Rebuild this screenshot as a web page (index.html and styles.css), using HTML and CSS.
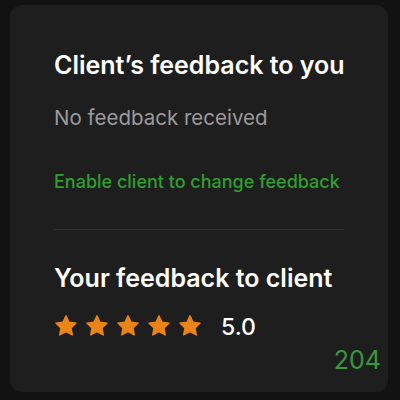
FILE: index.html
```html
<!DOCTYPE html>
<html>
<head>
<meta charset="utf-8">
<link rel="stylesheet" href="styles.css">
</head>
<body>
<div class="card">
  <h2 class="title">Client’s feedback to you</h2>
  <p class="muted">No feedback received</p>
  <a class="link">Enable client to change feedback</a>
  <hr class="divider">
  <h2 class="title title-2">Your feedback to client</h2>
  <div class="rating">
    <div class="stars">
      <svg class="star" viewBox="0 0 24 24"><path d="M12 1.8l3.1 6.4 7 .9-5.1 4.9 1.3 7L12 17.6 5.7 21l1.3-7-5.1-4.9 7-.9z"/></svg>
      <svg class="star" viewBox="0 0 24 24"><path d="M12 1.8l3.1 6.4 7 .9-5.1 4.9 1.3 7L12 17.6 5.7 21l1.3-7-5.1-4.9 7-.9z"/></svg>
      <svg class="star" viewBox="0 0 24 24"><path d="M12 1.8l3.1 6.4 7 .9-5.1 4.9 1.3 7L12 17.6 5.7 21l1.3-7-5.1-4.9 7-.9z"/></svg>
      <svg class="star" viewBox="0 0 24 24"><path d="M12 1.8l3.1 6.4 7 .9-5.1 4.9 1.3 7L12 17.6 5.7 21l1.3-7-5.1-4.9 7-.9z"/></svg>
      <svg class="star" viewBox="0 0 24 24"><path d="M12 1.8l3.1 6.4 7 .9-5.1 4.9 1.3 7L12 17.6 5.7 21l1.3-7-5.1-4.9 7-.9z"/></svg>
    </div>
    <span class="score">5.0</span>
  </div>
  <div class="count">204</div>
</div>
</body>
</html>
```
FILE: styles.css
```css
html, body {
  margin: 0;
  padding: 0;
  background: #121212;
  width: 400px;
  height: 400px;
  overflow: hidden;
}
body {
  padding: 5px 12px 8px 10px;
  box-sizing: border-box;
  font-family: Inter, "Liberation Sans", Arial, sans-serif;
}
.card {
  background: #1e1e1e;
  border-radius: 12px;
  height: 387px;
  box-sizing: border-box;
  padding: 45px 44px 0 44px;
  display: flex;
  flex-direction: column;
}
.card > * {
  flex-shrink: 0;
}
.title {
  margin: 0;
  color: #ffffff;
  font-size: 25px;
  font-weight: 600;
  line-height: 30px;
  white-space: nowrap;
}
.muted {
  margin: 26px 0 0 0;
  color: #9b9b9b;
  font-size: 20.5px;
  line-height: 24px;
  white-space: nowrap;
}
.link {
  margin-top: 42px;
  color: #2f9f2f;
  font-size: 18px;
  font-weight: 500;
  line-height: 20px;
  white-space: nowrap;
}
.divider {
  margin: 37px 0 0 0;
  border: 0;
  height: 1px;
  background: #343434;
}
.title-2 {
  margin-top: 33px;
}
.rating {
  margin-top: 21px;
  display: flex;
  align-items: center;
  gap: 19px;
  height: 24px;
}
.stars {
  display: flex;
  gap: 7px;
}
.star {
  width: 24px;
  height: 24px;
  fill: #ea8418;
  stroke: #ea8418;
  stroke-width: 1.4;
  stroke-linejoin: round;
}
.score {
  color: #ffffff;
  font-size: 23px;
  font-weight: 500;
  line-height: 24px;
  padding-top: 2px;
}
.count {
  align-self: flex-end;
  margin-right: -37px;
  margin-top: 7px;
  color: #3a983a;
  font-size: 25px;
  font-weight: 400;
  line-height: 30px;
}
```
